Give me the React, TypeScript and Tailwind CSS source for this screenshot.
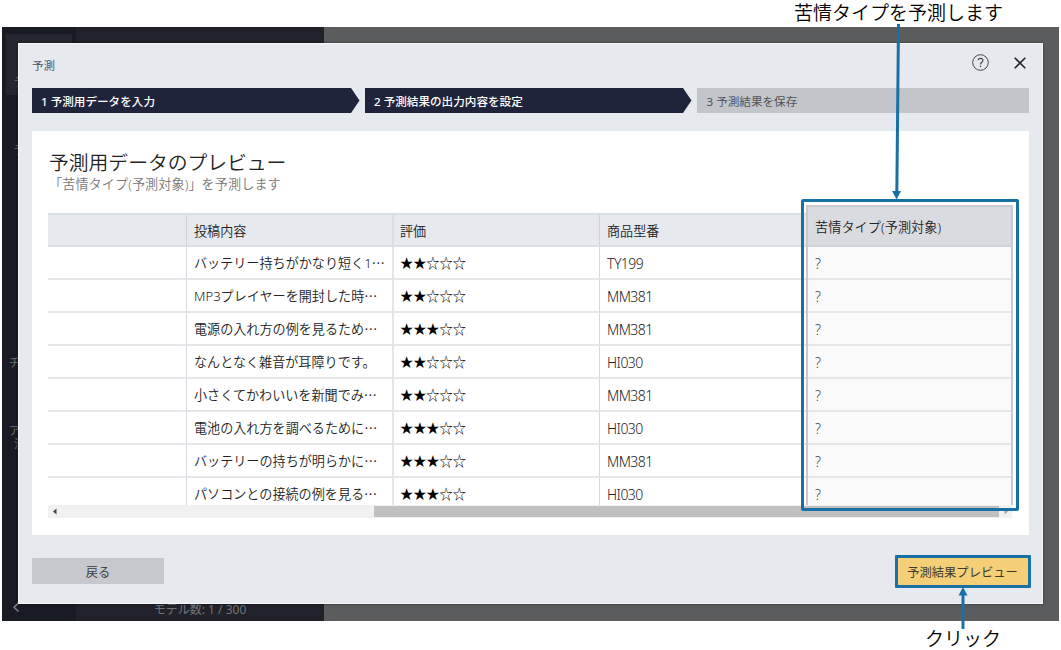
import React from "react";

const rows = [
  { text: "バッテリー持ちがかなり短く1", more: true, stars: 2, model: "TY199" },
  { text: "MP3プレイヤーを開封した時", more: true, stars: 2, model: "MM381" },
  { text: "電源の入れ方の例を見るため", more: true, stars: 3, model: "MM381" },
  { text: "なんとなく雑音が耳障りです。", more: false, stars: 2, model: "HI030" },
  { text: "小さくてかわいいを新聞でみ", more: true, stars: 2, model: "MM381" },
  { text: "電池の入れ方を調べるために", more: true, stars: 3, model: "HI030" },
  { text: "バッテリーの持ちが明らかに", more: true, stars: 3, model: "MM381" },
  { text: "パソコンとの接続の例を見る", more: true, stars: 3, model: "HI030" },
];

const GRID = "grid grid-cols-[139px_207px_206px_206px]";

function Backdrop() {
  return (
    <div className="ml-[2px] mt-[27px] flex h-[594px] w-[1057px] bg-[#5b5c5e] text-[#70737a]">
      <div className="relative w-[74px] bg-[#181b23] text-[11px] leading-4">
        <div className="ml-1 mt-[7px] h-[61px] w-[66px] bg-[#26262f]" />
        <span className="absolute left-[12px] top-[47px]">予</span>
        <span className="absolute left-[12px] top-[115px]">予</span>
        <span className="absolute left-[7px] top-[328px]">チ</span>
        <span className="absolute left-[7px] top-[396px]">ア</span>
        <span className="absolute left-[12px] top-[409px]">法</span>
        <svg className="absolute left-[10px] top-[574px]" width="8" height="12" viewBox="0 0 8 12" fill="none" stroke="#85878d" strokeWidth="1.4">
          <path d="M6.5 2 2 6.2 6.5 10.4" />
        </svg>
      </div>
      <div className="flex w-[248px] items-end justify-center bg-[#202129]">
        <span className="mb-[3px] text-[12px] leading-4">モデル数: 1 / 300</span>
      </div>
    </div>
  );
}

function Steps() {
  return (
    <div className="mt-[12px] flex h-[25px] text-[11.6px] leading-[27px]">
      <div className="relative w-[319px] bg-[#20243a] pl-[9px] font-medium text-white">
        1 予測用データを入力
        <svg className="absolute left-full top-0" width="9" height="25" viewBox="0 0 9 25">
          <path d="M0 0 8.5 12.5 0 25Z" fill="#20243a" />
        </svg>
      </div>
      <div className="relative ml-[13.5px] w-[318.5px] bg-[#20243a] pl-[9.5px] font-medium text-white">
        2 予測結果の出力内容を設定
        <svg className="absolute left-full top-0" width="9" height="25" viewBox="0 0 9 25">
          <path d="M0 0 8.5 12.5 0 25Z" fill="#20243a" />
        </svg>
      </div>
      <div className="ml-[13.5px] flex-1 bg-[#c2c5c9] pl-[10px] text-[#50535a]">3 予測結果を保存</div>
    </div>
  );
}

function Table() {
  return (
    <div className="flex h-[300px] w-[965px] overflow-hidden text-[13.1px] font-[350] text-[#222]">
      <div className="w-[758px] shrink-0 pt-2">
        <div className={GRID + " h-[34px] grid-rows-[30px] border-y-2 border-[#dbdee2] bg-[#e6e9ee] leading-[32px]"}>
          <div className="border-r border-[#cfd2d8]" />
          <div className="border-r-2 border-[#d9dce2] pl-[7px]">投稿内容</div>
          <div className="border-r border-[#cfd2d8] pl-[6px]">評価</div>
          <div className="pl-[7px]">商品型番</div>
        </div>
        {rows.map((r, i) => (
          <div key={i} className={GRID + " h-[33px] grid-rows-[33px] whitespace-nowrap leading-[33px]"}>
            <div className="border-b-2 border-r border-b-[#e6e7eb] border-r-[#d5d8dc]" />
            <div className="border-b-2 border-r-2 border-[#e4e6ea] pl-[7px]">
              {r.text}
              {r.more && <span className="font-['Noto_Sans_CJK_JP',sans-serif] leading-none">…</span>}
            </div>
            <div className="border-b-2 border-r border-b-[#e6e7eb] border-r-[#d5d8dc] pl-[6px] text-[13.2px] text-black">
              {"★".repeat(r.stars) + "☆".repeat(5 - r.stars)}
            </div>
            <div className="border-b-2 border-[#e6e7eb] pl-[7px] text-[14px] tracking-[-0.55px]">{r.model}</div>
          </div>
        ))}
      </div>
      <div className="flex-1 border-x-2 border-t-2 border-[#c9c9d0] bg-[#fafafa]">
        <div className="h-[40px] border-b-2 border-[#d2d3d8] bg-[#dadbe0] pl-[7px] tracking-[0.1px] leading-[41px]">苦情タイプ(予測対象)</div>
        {rows.map((_, i) => (
          <div key={i} className="h-[33px] border-b-2 border-[#e4e6e9] pl-[7px] text-[14px] leading-[33px] text-[#444]">?</div>
        ))}
      </div>
    </div>
  );
}

function Scrollbar() {
  return (
    <div className="flex h-[13px] w-[964px] items-center bg-[#f1f1f1]">
      <svg width="326" height="13" viewBox="0 0 326 13">
        <path d="M8.5 3.5v6L5 6.5Z" fill="#444" />
      </svg>
      <div className="h-[11px] w-[625px] bg-[#c0c0c0]" />
      <svg width="13" height="13" viewBox="0 0 13 13">
        <path d="M5.5 3.5v6L9 6.5Z" fill="#a5a5a5" />
      </svg>
    </div>
  );
}

function Dialog() {
  return (
    <div className="absolute left-[18px] top-[43px] flex h-[561px] w-[1024.5px] flex-col border border-[#f6f7f9] bg-[#e6e9ee] px-[13px] shadow-[0_0_2px_rgba(0,0,0,0.6)]">
      <div className="flex h-[32px] items-end justify-between">
        <span className="mb-px text-[11.5px] leading-[18px] text-[#50535a]">予測</span>
        <div className="flex items-center gap-[24px] pr-[2px]">
          <svg width="17" height="17" viewBox="0 0 17 17" fill="none" stroke="#44474c" className="mb-[5px]">
            <circle cx="8.5" cy="8.5" r="7.8" strokeWidth="1" />
            <path d="M6.2 6.3C6.2 3.7 10.9 3.7 10.9 6.3 10.9 8.2 8.5 8.2 8.5 10.4" strokeWidth="1.2" />
            <path d="M8.5 11.7v1.5" strokeWidth="1.3" />
          </svg>
          <svg width="14" height="14" viewBox="0 0 14 14" fill="none" stroke="#26282c" strokeWidth="1.6" className="mb-[5px]">
            <path d="M1.7 1.7 12.3 12.3M12.3 1.7 1.7 12.3" />
          </svg>
        </div>
      </div>
      <Steps />
      <main className="mt-[18px] h-[404px] bg-white pl-4 pt-[18px]">
        <h1 className="ml-[1px] h-[26px] text-[19.8px] font-[350] leading-[27px] text-[#222]">予測用データのプレビュー</h1>
        <p className="ml-[1px] h-[18px] text-[13.1px] font-[350] leading-[18px] tracking-[0.1px] text-[#777]">「苦情タイプ(予測対象)」を予測します</p>
        <div className="mt-[12px]">
          <Table />
          <Scrollbar />
        </div>
      </main>
      <footer className="mt-[23px] flex justify-between text-[12.3px] leading-[26px]">
        <button className="h-[26px] w-[132px] rounded-[1px] bg-[#c6c8ce] pt-[2px] text-[#3c3e44]">戻る</button>
        <button className="-mr-[2px] -mt-[3px] h-[33px] w-[136px] rounded-[1px] border-3 border-[#1870a5] bg-[#f5cf78] pt-[2px] text-[#40382a]">予測結果プレビュー</button>
      </footer>
    </div>
  );
}

export default function App() {
  return (
    <div className="relative flow-root h-[650px] w-[1061px] overflow-hidden bg-white font-['Noto_Sans','Noto_Sans_CJK_JP',sans-serif]">
      <Backdrop />
      <Dialog />
      <span className="absolute left-[794px] top-px whitespace-nowrap text-[19px] font-[350] leading-6 text-black">苦情タイプを予測します</span>
      <span className="absolute left-[925px] top-[627px] whitespace-nowrap text-[19px] font-[350] leading-6 text-black">クリック</span>
      <div className="absolute left-[801px] top-[199px] h-[312px] w-[218px] rounded-[2px] border-3 border-[#1870a5]" />
      <svg className="absolute left-0 top-0" width="1061" height="650" viewBox="0 0 1061 650" fill="#1870a5" stroke="none">
        <path d="M898.5 24 896.8 194" stroke="#1870a5" strokeWidth="3" />
        <path d="M892 191h9l-4.4 8.5Z" />
        <path d="M963 629V592" stroke="#1870a5" strokeWidth="3" />
        <path d="M958.5 595.5h9L963 587Z" />
      </svg>
    </div>
  );
}
